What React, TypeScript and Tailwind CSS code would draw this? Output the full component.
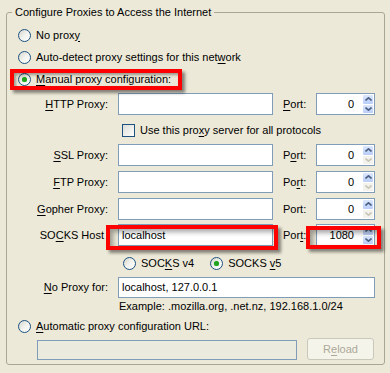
import React from "react";

// XP style radio button
function Radio({ checked }: { checked?: boolean }) {
    return (
        <span className="flex items-center justify-center w-[13px] h-[13px] shrink-0 rounded-full border border-[#1c5180] bg-gradient-to-br from-[#d6d6ce] via-[#f2f2ee] to-white">
            {checked && <span className="w-[5px] h-[5px] rounded-full bg-[#21a121] shadow-[0_0_1px_#58d858]" />}
        </span>
    );
}

function Checkbox() {
    return (
        <span className="w-[13px] h-[13px] shrink-0 border border-[#1c5180] bg-gradient-to-br from-[#dcdcd7] to-white" />
    );
}

const U = ({ children }: { children: React.ReactNode }) => (
    <span className="underline underline-offset-[2px] decoration-[1px]">{children}</span>
);

function Arrow({ up, disabled }: { up?: boolean; disabled?: boolean }) {
    return (
        <span
            className={
                disabled
                    ? "flex-1 flex items-center justify-center bg-[#f3f2ec]"
                    : "flex-1 flex items-center justify-center bg-gradient-to-b from-[#dde8fe] to-[#b9cdf8] rounded-[1px]"
            }
        >
            <svg width="7" height="4" viewBox="0 0 7 4">
                <polyline
                    points={up ? "0.5,3.5 3.5,0.8 6.5,3.5" : "0.5,0.5 3.5,3.2 6.5,0.5"}
                    fill="none"
                    stroke={disabled ? "#c9c7ba" : "#4d6185"}
                    strokeWidth="1.6"
                />
            </svg>
        </span>
    );
}

function PortField({ value, downDisabled }: { value: string; downDisabled?: boolean }) {
    return (
        <div className="flex w-[59px] h-[22px] border border-[#7f9db9] bg-white">
            <span className="flex-1 flex items-center justify-end pr-[9px]">{value}</span>
            <span className="flex flex-col w-[10px] py-[1px] mr-[1px] gap-[1px]">
                <Arrow up />
                <Arrow disabled={downDisabled} />
            </span>
        </div>
    );
}

function ProxyRow({ label, port, value = "", portValue = "0", downDisabled, className = "" }: {
    label: React.ReactNode;
    port: React.ReactNode;
    value?: string;
    portValue?: string;
    downDisabled?: boolean;
    className?: string;
}) {
    return (
        <div className={"flex items-center h-[22px] " + className}>
            <span className="w-[101px] text-right whitespace-nowrap">{label}</span>
            <div className="ml-[10px] w-[155px] h-[22px] border border-[#7f9db9] bg-white flex items-center px-[3px]">
                {value}
            </div>
            <span className="ml-[10px] w-[33px]">{port}</span>
            <PortField value={portValue} downDisabled={downDisabled} />
        </div>
    );
}

export default function App() {
    return (
        <div className="relative w-[390px] h-[373px] bg-[#ece9d8] text-[11px] leading-[13px] text-black font-['Liberation_Sans',Arial,sans-serif] overflow-hidden">
            <div className="pt-[6px] pl-[6px]">
                <fieldset className="w-[379px] h-[359px] border border-[#a9a794] rounded-[3px] flex flex-col">
                    <legend className="ml-[5px] px-[3px] leading-[13px]">Configure Proxies to Access the Internet</legend>

                    <div className="flex items-center gap-[5px] h-[22px] pl-[11px] mt-[5px]">
                        <Radio />
                        <span>No prox<U>y</U></span>
                    </div>
                    <div className="flex items-center gap-[5px] h-[22px] pl-[11px]">
                        <Radio />
                        <span>Auto-detect proxy settings for this net<U>w</U>ork</span>
                    </div>
                    <div className="flex items-center gap-[5px] h-[22px] pl-[11px]">
                        <Radio checked />
                        <span><U>M</U>anual proxy configuration:</span>
                    </div>

                    <ProxyRow className="mt-[3px]" label={<><U>H</U>TTP Proxy:</>} port={<><U>P</U>ort:</>} downDisabled={false} />

                    <div className="flex items-center gap-[5px] h-[22px] pl-[115px] mt-[4px]">
                        <Checkbox />
                        <span>Use this pro<U>x</U>y server for all protocols</span>
                    </div>

                    <ProxyRow className="mt-[3px]" label={<><U>S</U>SL Proxy:</>} port={<>P<U>o</U>rt:</>} downDisabled />
                    <ProxyRow className="mt-[5px]" label={<><U>F</U>TP Proxy:</>} port={<>Po<U>r</U>t:</>} downDisabled />
                    <ProxyRow className="mt-[5px]" label={<><U>G</U>opher Proxy:</>} port={<>Port:</>} downDisabled />
                    <ProxyRow
                        className="mt-[4px]"
                        label={<span className="pr-[4px]">SO<U>C</U>KS Host</span>}
                        port={<>Por<U>t</U>:</>}
                        value="localhost"
                        portValue="1080"
                    />

                    <div className="flex items-center h-[22px] pl-[116px] mt-[6px]">
                        <Radio />
                        <span className="ml-[5px]">SOC<U>K</U>S v4</span>
                        <span className="ml-[16px]"><Radio checked /></span>
                        <span className="ml-[5px]">SOCKS <U>v</U>5</span>
                    </div>

                    <div className="flex items-center h-[22px] mt-[2px]">
                        <span className="w-[101px] text-right"><U>N</U>o Proxy for:</span>
                        <div className="ml-[10px] w-[257px] h-[21px] border border-[#7f9db9] bg-white flex items-center px-[3px]">
                            localhost, 127.0.0.1
                        </div>
                    </div>

                    <div className="h-[14px] mt-[1px] pl-[112px] flex items-center">
                        Example: .mozilla.org, .net.nz, 192.168.1.0/24
                    </div>

                    <div className="flex items-center gap-[5px] h-[22px] pl-[11px] mt-[2px]">
                        <Radio />
                        <span><U>A</U>utomatic proxy configuration URL:</span>
                    </div>

                    <div className="flex items-end h-[22px] mt-[1px]">
                        <div className="ml-[30px] w-[260px] h-[20px] border border-[#7f9db9] bg-[#ebeadf]" />
                        <button
                            disabled
                            className="ml-[10px] w-[67px] h-[22px] border border-[#cac8bb] rounded-[3px] bg-[#f5f4ea] text-[#aca899]"
                        >
                            R<U>e</U>load
                        </button>
                    </div>
                </fieldset>
            </div>

            {/* red annotation boxes */}
            <div className="absolute left-[10px] top-[69px] w-[172px] h-[21px] border-[4px] border-[#ff0000] shadow-[3px_3px_3px_rgba(0,0,0,0.45),inset_2px_2px_3px_rgba(0,0,0,0.35)]" />
            <div className="absolute left-[106px] top-[225px] w-[172px] h-[25px] border-[4px] border-[#ff0000] shadow-[3px_3px_3px_rgba(0,0,0,0.45),inset_3px_3px_5px_rgba(0,0,0,0.35)]" />
            <div className="absolute left-[306px] top-[226px] w-[75px] h-[23px] border-[4px] border-[#ff0000] shadow-[3px_3px_3px_rgba(0,0,0,0.45),inset_3px_3px_5px_rgba(0,0,0,0.35)]" />
        </div>
    );
}
